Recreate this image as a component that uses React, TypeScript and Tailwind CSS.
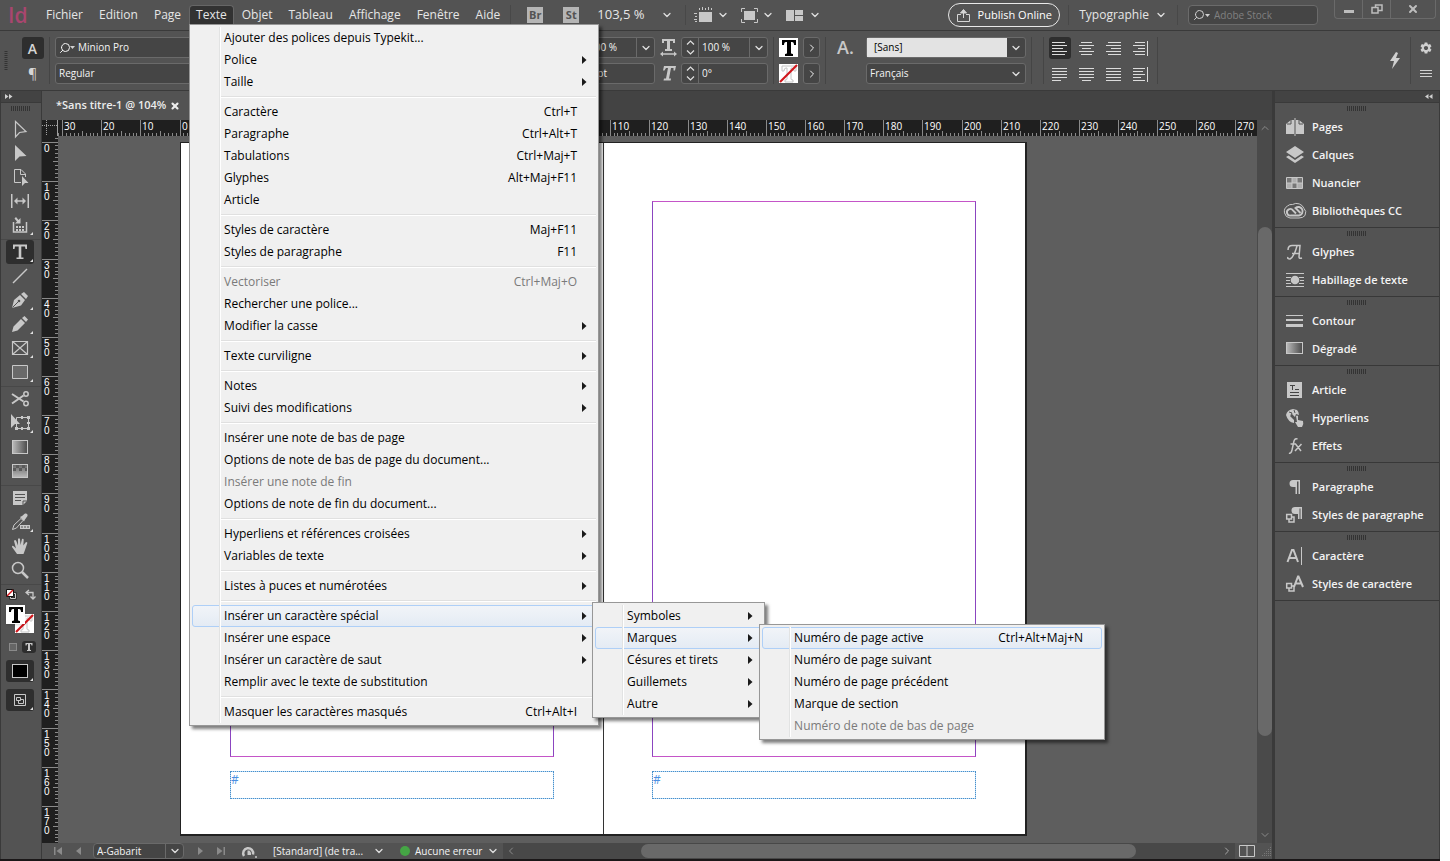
import type { ReactNode } from 'react';
import { ChevronDown, ChevronRight, ChevronLeft, ChevronUp, Search, X } from 'lucide-react';
import { MdSettings } from 'react-icons/md';

type MenuEntry = {
    label: string;
    shortcut?: string;
    disabled?: boolean;
    arrow?: boolean;
    active?: boolean;
    children?: Entry[];
    box?: string;
};
type Entry = MenuEntry | '-';

const marquesMenu: Entry[] = [
    { label: 'Numéro de page active', shortcut: 'Ctrl+Alt+Maj+N', active: true },
    { label: 'Numéro de page suivant' },
    { label: 'Numéro de page précédent' },
    { label: 'Marque de section' },
    { label: 'Numéro de note de bas de page', disabled: true },
];

const specialMenu: Entry[] = [
    { label: 'Symboles', arrow: true },
    { label: 'Marques', arrow: true, active: true, children: marquesMenu, box: 'left-[164px] w-[346px]' },
    { label: 'Césures et tirets', arrow: true },
    { label: 'Guillemets', arrow: true },
    { label: 'Autre', arrow: true },
];

const texteMenu: Entry[] = [
    { label: 'Ajouter des polices depuis Typekit...' },
    { label: 'Police', arrow: true },
    { label: 'Taille', arrow: true },
    '-',
    { label: 'Caractère', shortcut: 'Ctrl+T' },
    { label: 'Paragraphe', shortcut: 'Ctrl+Alt+T' },
    { label: 'Tabulations', shortcut: 'Ctrl+Maj+T' },
    { label: 'Glyphes', shortcut: 'Alt+Maj+F11' },
    { label: 'Article' },
    '-',
    { label: 'Styles de caractère', shortcut: 'Maj+F11' },
    { label: 'Styles de paragraphe', shortcut: 'F11' },
    '-',
    { label: 'Vectoriser', shortcut: 'Ctrl+Maj+O', disabled: true },
    { label: 'Rechercher une police...' },
    { label: 'Modifier la casse', arrow: true },
    '-',
    { label: 'Texte curviligne', arrow: true },
    '-',
    { label: 'Notes', arrow: true },
    { label: 'Suivi des modifications', arrow: true },
    '-',
    { label: 'Insérer une note de bas de page' },
    { label: 'Options de note de bas de page du document...' },
    { label: 'Insérer une note de fin', disabled: true },
    { label: 'Options de note de fin du document...' },
    '-',
    { label: 'Hyperliens et références croisées', arrow: true },
    { label: 'Variables de texte', arrow: true },
    '-',
    { label: 'Listes à puces et numérotées', arrow: true },
    '-',
    { label: 'Insérer un caractère spécial', arrow: true, active: true, children: specialMenu, box: 'left-[400px] w-[173px]' },
    { label: 'Insérer une espace', arrow: true },
    { label: 'Insérer un caractère de saut', arrow: true },
    { label: 'Remplir avec le texte de substitution' },
    '-',
    { label: 'Masquer les caractères masqués', shortcut: 'Ctrl+Alt+I' },
];

function Menu({ entries, box }: { entries: Entry[]; box: string }) {
    return (
        <ul className={`absolute z-20 border border-[#979797] bg-[#f0f0f0] p-0.5 text-[12px] text-black shadow-[3px_3px_3px_rgba(0,0,0,0.5)] ${box}`}>
            {entries.map((entry, i) =>
                entry === '-' ? (
                    <li key={i} className="flex h-2 items-center border-l border-transparent pl-7">
                        <div className="h-0.5 w-full border-t border-[#e0e0e0] bg-white" />
                    </li>
                ) : (
                    <li key={i} className="relative">
                        <button
                            type="button"
                            disabled={entry.disabled}
                            className={`flex h-[22px] w-full items-center rounded-[3px] border pr-2 pl-[31px] text-left whitespace-nowrap ${entry.active
                                ? 'border-[#aecff7] bg-gradient-to-b from-[#f1f4f8] to-[#e4ebf4]'
                                : 'border-transparent'
                                } ${entry.disabled ? 'text-[#7a7a7a]' : ''}`}
                        >
                            <span className="flex-1">{entry.label}</span>
                            {entry.shortcut && <span className="pr-2.5">{entry.shortcut}</span>}
                            {entry.arrow && (
                                <svg width="5" height="8" viewBox="0 0 5 8" fill="#1a1a1a"><path d="M0 0 L4.5 4 L0 8Z" /></svg>
                            )}
                        </button>
                        {entry.children && <Menu entries={entry.children} box={`-top-[3px] ${entry.box}`} />}
                    </li>
                ),
            )}
            <li aria-hidden="true" className="pointer-events-none absolute inset-y-0.5 left-[29px] w-0.5 border-l border-[#e2e3e3] bg-white" />
        </ul>
    );
}

const Down = () => <ChevronDown className="h-3 w-3 shrink-0 text-[#e0e0e0]" strokeWidth={2.5} />;

const Divider = () => <div className="h-full w-px shrink-0 bg-[#454545]" />;

function Grip() {
    return (
        <div className="flex h-2.5 items-center justify-center">
            <svg width="20" height="5" viewBox="0 0 20 5" className="text-[#333]">
                <path d="M.5 0V5M2.500 0V5M4.500 0V5M6.500 0V5M8.500 0V5M10.500 0V5M12.500 0V5M14.500 0V5M16.500 0V5M18.500 0V5" stroke="currentColor" />
            </svg>
        </div>
    );
}

function TitleBar() {
    const before = ['Fichier', 'Edition', 'Page'];
    const after = ['Objet', 'Tableau', 'Affichage', 'Fenêtre', 'Aide'];
    return (
        <header className="flex h-[30px] shrink-0 items-center text-[12px] text-[#e6e6e6]">
            <div className="w-[38px] shrink-0 pl-2 text-[21px] leading-none font-semibold text-[#a8466f]">Id</div>
            <nav className="flex h-full shrink-0 items-center">
                {before.map((name) => <button key={name} type="button" className="px-2">{name}</button>)}
                <div className="relative self-start pt-[5px]">
                    <button type="button" className="flex h-[19px] items-center rounded-t-sm border border-b-0 border-[#666] bg-[#323232] px-1.5">Texte</button>
                    <Menu entries={texteMenu} box="top-6 left-0 w-[410px]" />
                </div>
                {after.map((name) => <button key={name} type="button" className="px-2">{name}</button>)}
            </nav>
            <div className="ml-0.5 flex items-center">
                <div className="h-5 w-px bg-[#484848]" />
                <button type="button" className="ml-4 h-4 w-4 bg-[#b5b5b5] text-[11px] leading-4 font-bold text-[#535353]">Br</button>
                <button type="button" className="ml-5 h-4 w-4 bg-[#b5b5b5] text-[11px] leading-4 font-bold text-[#535353]">St</button>
                <span className="ml-[18px] w-16 text-[13px]">103,5 %</span>
                <Down />
                <div className="mx-2 ml-3 h-5 w-px bg-[#484848]" />
                <svg width="19" height="16" viewBox="0 0 19 16" className="text-[#c8c8c8]">
                    <rect x="5" y="5" width="13" height="10" fill="currentColor" />
                    <path d="M5.500 1V3M8.500 0V3M11.500 1V3M14.500 0V3M17.500 1V3M0 6.500H3M1 9.500H3M0 12.500H3M1 14.500H3" stroke="currentColor" />
                </svg>
                <span className="mr-2 ml-1"><Down /></span>
                <svg width="17" height="15" viewBox="0 0 17 15" className="mx-1 text-[#c8c8c8]">
                    <rect x="3" y="3" width="11" height="9" fill="currentColor" />
                    <path d="M.5 4V.5H4M13 .5H16.500V4M16.500 11V14.500H13M4 14.500H.5V11" fill="none" stroke="currentColor" />
                </svg>
                <span className="mr-3"><Down /></span>
                <svg width="17" height="11" viewBox="0 0 17 11" fill="#c8c8c8"><path d="M0 0H8V11H0ZM9 0H17V5H9ZM9 6H17V11H9Z" /></svg>
                <span className="ml-1.5"><Down /></span>
            </div>
            <div className="ml-auto flex h-full shrink-0 items-center">
                <button type="button" className="flex h-6 w-28 items-center justify-center gap-2 rounded-full border border-[#e8e8e8] text-white">
                    <svg width="13" height="13" viewBox="0 0 13 13" fill="none" stroke="#d6d6d6"><path d="M4 5.500H.5V12.500H12.500V5.500H9M6.500 9V1.500" /><path d="M3.500 4 6.500.5 9.500 4Z" fill="#d6d6d6" /></svg>
                    <span className="text-[11px]">Publish Online</span>
                </button>
                <div className="mx-2 mr-2.5 h-5 w-px bg-[#484848]" />
                <button type="button" className="flex items-center gap-1.5">Typographie <Down /></button>
                <div className="mx-2.5 h-5 w-px bg-[#484848]" />
                <label className="flex h-5 w-[130px] items-center gap-1 rounded-sm border border-[#6b6b6b] bg-[#454545] px-1">
                    <Search className="h-3 w-3 shrink-0 -scale-x-100 text-[#d0d0d0]" />
                    <svg width="5" height="3" fill="#d0d0d0" className="-ml-1 shrink-0"><path d="M0 0H5L2.500 3Z" /></svg>
                    <input aria-label="Adobe Stock" placeholder="Adobe Stock" className="min-w-0 flex-1 bg-transparent text-[10px] placeholder:text-[#808080]" />
                </label>
                <div className="mr-1 ml-4 flex h-[19px] self-start rounded-b-sm border border-t-0 border-[#6a6a6a] text-[#bdbdbd]">
                    <button type="button" aria-label="Réduire" className="flex w-7 items-center justify-center border-r border-[#6a6a6a] pt-1"><svg width="10" height="3"><path d="M0 0H10V3H0Z" fill="currentColor" /></svg></button>
                    <button type="button" aria-label="Restaurer" className="flex w-7 items-center justify-center border-r border-[#6a6a6a]">
                        <svg width="12" height="10" viewBox="0 0 12 10" fill="none" stroke="currentColor" strokeWidth="1.500"><path d="M1 3.500H7V9H1ZM4.500 3V1H11V6.500H7.500" /></svg>
                    </button>
                    <button type="button" aria-label="Fermer" className="flex w-11 items-center justify-center"><X className="h-3 w-3" strokeWidth={4} /></button>
                </div>
            </div>
        </header>
    );
}

const fieldBox = 'flex h-[21px] items-center rounded-[3px] border border-[#6a6a6a] bg-[#454545]';

function Spinner({ label, value, drop }: { label: string; value: string; drop?: boolean }) {
    return (
        <label className={`${fieldBox} w-[87px] shrink-0`}>
            <span className="flex h-full w-[17px] shrink-0 flex-col items-center justify-center border-r border-[#6a6a6a]">
                <svg width="9" height="15" viewBox="0 0 9 15" fill="none" stroke="#e0e0e0" strokeWidth="1.200"><path d="M1 4.500 4.500 1 8 4.500M1 10.500 4.500 14 8 10.500" /></svg>
            </span>
            <input aria-label={label} defaultValue={value} className="min-w-0 flex-1 bg-transparent pl-[3px]" />
            {drop && <span className="flex h-full w-[18px] shrink-0 items-center justify-center border-l border-[#6a6a6a]"><Down /></span>}
        </label>
    );
}

function AlignIcon({ rows, bar }: { rows: [number, number][]; bar?: boolean }) {
    return (
        <svg width="16" height="15" viewBox="0 0 16 15" stroke="#dcdcdc" fill="none">
            {rows.map(([a, b], i) => <path key={i} d={`M${a} ${i * 3 + 1.5}H${b}`} />)}
            {bar && <path d="M14.500 0V15" />}
        </svg>
    );
}

const alignments: { name: string; bar?: boolean; rows: [number, number][] }[] = [
    { name: 'Aligner à gauche', rows: [[0, 13], [0, 15], [0, 11], [0, 15], [0, 13]] },
    { name: 'Centrer', rows: [[2, 13], [0, 15], [3, 12], [0, 15], [2, 13]] },
    { name: 'Aligner à droite', rows: [[2, 15], [0, 15], [5, 15], [0, 15], [2, 15]] },
    { name: 'Vers le dos', bar: true, rows: [[2, 12], [0, 12], [5, 12], [0, 12], [2, 12]] },
    { name: 'Justifier à gauche', rows: [[0, 15], [0, 15], [0, 15], [0, 15], [0, 9]] },
    { name: 'Justifier centré', rows: [[0, 15], [0, 15], [0, 15], [0, 15], [3, 12]] },
    { name: 'Justifier tout', rows: [[0, 15], [0, 15], [0, 15], [0, 15], [0, 15]] },
    { name: 'Opposé au dos', bar: true, rows: [[0, 12], [0, 10], [0, 12], [0, 8], [0, 12]] },
];

const serifT = 'M1 0H15V5H13Q13 2 11 2H10V13Q10 14 12 14V16H4V14Q6 14 6 13V2H5Q3 2 3 5H1Z';

const TGlyph = ({ className }: { className: string }) => (
    <svg viewBox="0 0 16 16" className={className} fill="currentColor"><path d={serifT} /></svg>
);

const NoneT = ({ size }: { size: number }) => (
    <svg width={size} height={size} viewBox="0 0 19 19">
        <path d="M0 0H19V19H0Z" fill="#fff" />
        <path d={serifT} transform="translate(2 2)" fill="none" stroke="#c4c4c4" />
        <path d="M1 18 18 1" stroke="#d0151b" strokeWidth="2.200" />
    </svg>
);

const ArrowButton = ({ label }: { label: string }) => (
    <button type="button" aria-label={label} className={`${fieldBox} w-[17px] justify-center`}><ChevronRight className="h-3 w-3" /></button>
);

function ControlBar() {
    return (
        <div className="flex h-[61px] shrink-0 gap-[5px] border-y border-[#3a3a3a] px-1 py-1.5 text-[10px] text-[#f4f4f4]">
            <div className="flex w-3 items-center"><svg width="4" height="20"><path d="M2 0V20" stroke="#333" strokeWidth="3" strokeDasharray="1 1" /></svg></div>
            <div className="flex w-[23px] flex-col items-center gap-1">
                <button type="button" className="h-[22px] w-[22px] rounded-[3px] bg-[#2e2e2e] text-[14px] font-semibold text-[#d6d6d6]">A</button>
                <button type="button" className="h-[21px] text-[14px] text-[#d6d6d6]">¶</button>
            </div>
            <Divider />
            <div className="flex w-[481px] shrink-0 flex-col gap-[5px]">
                <label className={`${fieldBox} w-[300px] gap-[3px] px-[3px]`}>
                    <Search className="h-3 w-3 -scale-x-100" />
                    <svg width="5" height="3" fill="#d0d0d0" className="-ml-1"><path d="M0 0H5L2.500 3Z" /></svg>
                    <input aria-label="Police" defaultValue="Minion Pro" className="min-w-0 flex-1 bg-transparent" />
                </label>
                <select aria-label="Style de police" className={`${fieldBox} w-[300px] appearance-none px-[3px]`}><option>Regular</option></select>
            </div>
            <div className="flex w-[22px] shrink-0 flex-col" />
            <div className="flex flex-col gap-[5px]">
                <Spinner label="Échelle verticale" value="100 %" drop />
                <Spinner label="Décalage vertical" value="0 pt" />
            </div>
            <div className="flex w-4 shrink-0 flex-col items-center gap-[5px] text-[#c8c8c8]">
                <svg width="17" height="21" viewBox="0 0 17 21" fill="currentColor">
                    <path d="M2 2H15V6H13V4H10V12H12V14H5V12H7V4H4V6H2ZM0 17 3 14.500V16.300H14V14.500L17 17 14 19.500V17.700H3V19.500Z" />
                </svg>
                <svg width="17" height="21" viewBox="0 0 17 21" fill="currentColor"><path d="M4 3H16L15 7.500H13.500V5H11L9 15.500H11L10.700 17.500H3.500L4 15.500H6L8 5H6L4.500 7.500H3Z" /></svg>
            </div>
            <div className="flex flex-col gap-[5px]">
                <Spinner label="Échelle horizontale" value="100 %" drop />
                <Spinner label="Inclinaison" value="0°" />
            </div>
            <Divider />
            <div className="flex w-[19px] flex-col items-end gap-[7px] pt-px">
                <span className="flex h-[19px] w-[19px] items-center justify-center bg-white text-black"><TGlyph className="h-4 w-4" /></span>
                <NoneT size={19} />
            </div>
            <div className="flex flex-col gap-[5px]"><ArrowButton label="Fond" /><ArrowButton label="Contour de texte" /></div>
            <Divider />
            <div className="w-[30px] pl-1.5 text-[18px] leading-5 font-semibold text-[#c8c8c8]">A.</div>
            <div className="flex w-40 shrink-0 flex-col gap-[5px]">
                <label className={`${fieldBox} w-full`}>
                    <select aria-label="Style de caractère" className="h-full flex-1 appearance-none bg-[#e3e3e3] px-[7px] text-black"><option>[Sans]</option></select>
                    <span className="flex w-[18px] justify-center"><Down /></span>
                </label>
                <label className={`${fieldBox} w-full`}>
                    <select aria-label="Langue" className="h-full flex-1 appearance-none bg-transparent px-[3px]"><option>Français</option></select>
                    <span className="flex w-[18px] justify-center"><Down /></span>
                </label>
            </div>
            <Divider />
            <span className="w-px" />
            <Divider />
            <div className="grid shrink-0 grid-cols-4 content-start gap-x-[5px] gap-y-1">
                {alignments.map((a, i) => (
                    <button key={a.name} type="button" aria-label={a.name} className={`flex h-[22px] w-[22px] items-center justify-center rounded-[3px] ${i === 0 ? 'bg-[#2e2e2e]' : ''}`}>
                        <AlignIcon rows={a.rows} bar={a.bar} />
                    </button>
                ))}
            </div>
            <Divider />
            <div className="ml-auto flex items-center pr-1">
                <svg width="12" height="17" viewBox="0 0 12 17" fill="#d0d0d0"><path d="M7 0 1 9H5L3 17 11 6H7L9 1Z" /></svg>
            </div>
            <Divider />
            <div className="flex w-5 flex-col items-center gap-[5px] text-[#d0d0d0]">
                <button type="button" aria-label="Personnaliser" className="flex h-[21px] items-center"><MdSettings className="h-3.5 w-3.5" /></button>
                <button type="button" aria-label="Menu du panneau" className="flex h-[21px] items-center">
                    <svg width="12" height="9" stroke="currentColor"><path d="M0 1.500H12M0 4.500H12M0 7.500H12" /></svg>
                </button>
            </div>
        </div>
    );
}

/* Tool drawings share a 24x24 box */
const tools: { name: string; corner?: boolean; art: ReactNode }[][] = [
    [
        { name: 'Sélection', art: <path d="M7.500 4.500V20L11.500 15.500 18 14.500Z" fill="none" stroke="currentColor" strokeWidth="1.200" /> },
        { name: 'Sélection directe', art: <path d="M7 4V20L11.500 15.500 18.500 15Z" /> },
        { name: 'Page', art: <><path d="M13 17.500H6.500V4.500H13L17.500 9V12M12.500 5V9.500H17" fill="none" stroke="currentColor" /><path d="M14 11V21L17 18H20.500Z" /></> },
        { name: 'Espace', art: <path d="M3 5H4.500V19H3ZM19.500 5H21V19H19.500ZM6 12 9.500 8.500V11.300H14.500V8.500L18 12 14.500 15.500V12.700H9.500V15.500Z" /> },
        { name: 'Collecteur de contenu', corner: true, art: <><path d="M5.500 9V19H18.500V9" fill="none" stroke="currentColor" strokeWidth="1.500" /><path d="M8 13H10V15H8ZM11 13H13V15H11ZM14 13H16V15H14ZM8 16H10V18H8ZM11 16H13V18H11ZM14 16H16V18H14ZM12.500 5V10.500H7L9 8.500 6.500 5.500 8 4 10.500 7Z" /></> },
    ],
    [
        { name: 'Texte', corner: true, art: <path d="M5 4.500H19V9H17.500L17 6.500H13.300V17.500H15.500V19H8.500V17.500H10.700V6.500H7L6.500 9H5Z" /> },
        { name: 'Trait', art: <path d="M5 19 19 5" stroke="currentColor" strokeWidth="1.500" /> },
        { name: 'Plume', corner: true, art: <><path d="M4 20 6 12 12 7 17 12 13 17.500ZM13 6 16 4 20 8 18 11Z" /><path d="M4.500 19.500 10.500 13.500" stroke="#535353" /><circle cx="11" cy="13" r="1.300" fill="#535353" /></> },
        { name: 'Crayon', corner: true, art: <path d="M4 20 5.500 14.500 13 7 17 11 9.500 18.500ZM14 6 16.500 4 20 7.500 18 10Z" /> },
        { name: 'Bloc rectangulaire', corner: true, art: <path d="M4.500 5.500H19.500V18.500H4.500ZM4.500 5.500 19.500 18.500M19.500 5.500 4.500 18.500" fill="none" stroke="currentColor" strokeWidth="1.200" /> },
        { name: 'Rectangle', corner: true, art: <path d="M4.500 5.500H19.500V18.500H4.500Z" fill="#6a6a6a" stroke="currentColor" /> },
    ],
    [
        { name: 'Ciseaux', art: <><path d="M4 7 15.500 14.500M4 16.500 15.500 8.500" stroke="currentColor" strokeWidth="2" /><g fill="none" stroke="currentColor" strokeWidth="1.500"><circle cx="18" cy="7" r="2.200" /><circle cx="18" cy="16.500" r="2.200" /></g></> },
        { name: 'Transformation', corner: true, art: <><path d="M8.500 6.500H20.500V17.500H8.500Z" fill="none" stroke="currentColor" /><path d="M3 3V17L7 13H12ZM19 5H22V8H19ZM19 16H22V19H19ZM7 16H10V19H7ZM13 5H15V8H13ZM13 16H15V19H13ZM19 11H22V13H19Z" /></> },
        { name: 'Nuance de dégradé', art: <rect x="4.500" y="5.500" width="15" height="13" fill="url(#fade)" stroke="currentColor" /> },
        { name: 'Contour progressif', art: <><rect x="4.500" y="5.500" width="15" height="13" fill="url(#fadeUp)" stroke="currentColor" /><path d="M8 6H11V9H8ZM14 6H17V9H14ZM5 9H8V12H5ZM11 9H14V12H11ZM17 9H19V12H17Z" fill="#5a5a5a" /></> },
    ],
    [
        { name: 'Note', art: <><path d="M5 5H19V15L15 19H5Z" /><path d="M7 8.500H17M7 11.500H17M7 14.500H13M15 19V15H19" stroke="#535353" fill="none" /></> },
        { name: 'Pipette', corner: true, art: <><path d="M4.500 19.500 6 15 13 8.500 15 10.500 8.500 18Z" fill="none" stroke="currentColor" /><path d="M12 7 14 6 17 3.500Q20 3 19.500 6L17 9.500 16 11.500ZM12 15H22V19H12Z" /><path d="M13 17H21" stroke="#535353" strokeDasharray="2 1" /></> },
        { name: 'Main', art: <path d="M9 20 4 13Q4 11 6 12.500L8 14.500 6 7Q7 5 8.300 7L10 11.500 10 5Q11 3.500 12 5L12.500 11 14 5Q15.500 4 15.700 6L15.300 11.500 18 8Q20 8 19 10L17 16 15.500 20Z" /> },
        { name: 'Zoom', art: <><circle cx="10" cy="10" r="5.500" fill="none" stroke="currentColor" strokeWidth="1.500" /><path d="M14 14 20 20" stroke="currentColor" strokeWidth="2.500" /></> },
    ],
];

function Toolbar() {
    return (
        <aside className="flex w-[42px] shrink-0 flex-col border-x border-l-[#3a3a3a] border-r-[#3a3a3a] text-[#c8c8c8]">
            <div className="flex h-3 items-center border-b border-[#3a3a3a] bg-[#434343] pl-1">
                <svg width="8" height="5" fill="#d0d0d0"><path d="M0 0 3.500 2.500 0 5ZM4 0 7.500 2.500 4 5Z" /></svg>
            </div>
            <Grip />
            <div className="h-1" />
            {tools.map((group, g) => (
                <div key={g} className="flex flex-col border-b border-[#484848] pb-0.5">
                    {group.map((tool) => (
                        <button
                            key={tool.name}
                            type="button"
                            aria-label={tool.name}
                            className={`relative ml-[5px] flex h-6 w-7 items-center justify-center rounded-[3px] ${tool.name === 'Texte' ? 'bg-[#2e2e2e]' : ''}`}
                        >
                            <svg width="24" height="24" viewBox="0 0 24 24" fill="currentColor">
                                <defs>
                                    <linearGradient id="fade"><stop stopColor="#bbb" /><stop offset="1" stopColor="#4a4a4a" /></linearGradient>
                                    <linearGradient id="fadeUp" x1="0" y1="0" x2="0" y2="1"><stop stopColor="#666" /><stop offset="1" stopColor="#bbb" /></linearGradient>
                                </defs>
                                {tool.art}
                            </svg>
                            {tool.corner && <svg width="3" height="3" className="absolute right-px bottom-0.5" fill="#e0e0e0"><path d="M3 0V3H0Z" /></svg>}
                        </button>
                    ))}
                </div>
            ))}
            <div className="flex h-4 items-center justify-between px-[5px] pt-0.5">
                <svg width="11" height="11" viewBox="0 0 11 11"><path d="M4.500 4.500H9.500V9.500H4.500Z" fill="none" stroke="#111" strokeWidth="2" /><path d="M4.500 4.500H9.500V9.500H4.500Z" fill="none" stroke="#ccc" /><path d="M.5.5H7.500V7.500H.5Z" fill="#fff" stroke="#111" /><path d="M1 7 7 1" stroke="#d0151b" strokeWidth="1.500" /></svg>
                <svg width="11" height="11" viewBox="0 0 11 11" fill="none" stroke="currentColor" strokeWidth="1.300"><path d="M2 3.500H8V9M4 1 1 3.500 4 6M5.500 7.500 8 10 10.500 7.500" /></svg>
            </div>
            <div className="relative ml-[5px] h-8 w-7">
                <span className="absolute right-0 bottom-0"><NoneT size={19} /></span>
                <span className="absolute top-1 left-0 flex h-[19px] w-[19px] items-center justify-center bg-white text-black shadow"><TGlyph className="h-4 w-4" /></span>
            </div>
            <div className="mt-1 ml-[5px] flex h-5 w-[30px] items-center justify-between">
                <button type="button" aria-label="Conteneur" className="ml-[3px] h-2 w-2 border border-[#8a8a8a] bg-[#666]" />
                <button type="button" aria-label="Appliquer au texte" className="flex h-3 w-3.5 items-center justify-center rounded-[3px] bg-[#2e2e2e]"><TGlyph className="h-2 w-2" /></button>
            </div>
            <button type="button" aria-label="Appliquer la couleur" className="relative mt-[3px] ml-[5px] flex h-[22px] w-7 items-center justify-center rounded-[3px] bg-[#2e2e2e]">
                <span className="h-3.5 w-4 border border-[#c8c8c8] bg-black" />
                <svg width="3" height="3" className="absolute right-px bottom-px" fill="#e0e0e0"><path d="M3 0V3H0Z" /></svg>
            </button>
            <button type="button" aria-label="Mode d'affichage" className="relative mt-[7px] ml-[5px] flex h-[22px] w-7 items-center justify-center rounded-[3px] bg-[#2e2e2e]">
                <svg width="12" height="12" viewBox="0 0 12 12" fill="none" stroke="#c8c8c8"><path d="M.5.5H11.500V11.500H.5ZM2.500 3.500H6.500V6.500H2.500ZM7 5.500H9.500V9.500H4.500V7" /></svg>
                <svg width="3" height="3" className="absolute right-px bottom-px" fill="#e0e0e0"><path d="M3 0V3H0Z" /></svg>
            </button>
        </aside>
    );
}

const STEP = 39.1; // screen pixels for 10 mm

function tickPath(origin: number, from: number, to: number, vertical: boolean) {
    let d = '';
    for (let mm = from; mm <= to; mm++) {
        const p = Math.floor(origin + (mm * STEP) / 10) + 0.5;
        const len = mm % 10 === 0 ? 16 : mm % 5 === 0 ? 5 : 3;
        d += vertical ? `M${16 - len} ${p}H16` : `M${p} ${16 - len}V16`;
    }
    return d;
}

function HorizontalRuler() {
    const labels = Array.from({ length: 31 }, (_, i) => i - 3);
    return (
        <svg className="h-4 min-w-0 flex-1 bg-[#1f1f1f]" fontSize="10" fill="#fff">
            <path d={tickPath(122, -31, 274, false)} stroke="#8a8a8a" />
            {labels.map((n) => <text key={n} x={Math.floor(124 + n * STEP)} y="10">{Math.abs(n * 10)}</text>)}
        </svg>
    );
}

function VerticalRuler() {
    const labels = Array.from({ length: 18 }, (_, i) => i);
    return (
        <svg className="w-4 shrink-0 bg-[#1f1f1f] font-['Liberation_Sans',sans-serif]" fontSize="10" fill="#fff">
            <path d={tickPath(6, -1, 179, true)} stroke="#8a8a8a" />
            {labels.map((n) => (
                <text key={n} y={Math.floor(16 + n * STEP)}>
                    {String(n * 10).split('').map((digit, i) => <tspan key={i} x="2" dy={i ? 9 : 0}>{digit}</tspan>)}
                </text>
            ))}
        </svg>
    );
}

function SpreadPage({ side }: { side: string }) {
    return (
        <div className={`flex flex-1 basis-0 flex-col pt-[58px] ${side}`}>
            <div className="h-[556px] border border-x-[#8b45c0] border-y-[#c455c8]" />
            <div className="mt-3.5 h-7 border border-[#b4d8f5] text-[12px] leading-4 text-[#4a90e2] outline-1 -outline-offset-1 outline-[#4a8fc8] outline-dotted">#</div>
        </div>
    );
}

function StatusBar() {
    return (
        <footer className="flex h-4 shrink-0 items-center bg-[#484848] text-[10px] text-[#f4f4f4]">
            <div className="flex h-full shrink-0 items-center bg-[#535353] pl-3">
                <button type="button" aria-label="Première page"><svg width="8" height="8" fill="#8a8a8a"><path d="M0 0H1.500V8H0ZM8 0V8L2.500 4Z" /></svg></button>
                <button type="button" aria-label="Page précédente" className="ml-3.5"><svg width="5" height="8" fill="#8a8a8a"><path d="M5 0V8L0 4Z" /></svg></button>
                <label className="ml-3 flex h-4 w-[91px] items-center rounded-sm border border-[#6a6a6a] bg-[#454545]">
                    <select aria-label="Page" className="h-full w-[71px] appearance-none bg-transparent px-[3px]"><option>A-Gabarit</option></select>
                    <span className="flex h-full w-[18px] items-center justify-center border-l border-[#6a6a6a]"><Down /></span>
                </label>
                <button type="button" aria-label="Page suivante" className="ml-3.5"><svg width="5" height="8" fill="#8a8a8a"><path d="M0 0V8L5 4Z" /></svg></button>
                <button type="button" aria-label="Dernière page" className="ml-3.5"><svg width="8" height="8" fill="#8a8a8a"><path d="M0 0V8L5.500 4ZM6.500 0H8V8H6.500Z" /></svg></button>
                <svg width="16" height="13" viewBox="0 0 16 13" className="mr-4 ml-4"><path d="M3 11A5 5 0 1 1 12 9.500" fill="none" stroke="#c8c8c8" strokeWidth="2.500" /><path d="M6.500 5.500H8.500L10 7.500V10H6.500Z" fill="#c8c8c8" /><circle cx="15" cy="12" r="1" fill="#c8c8c8" /></svg>
                <span className="w-[100px] whitespace-nowrap">[Standard] (de tra...</span>
                <Down />
                <span className="mr-[5px] ml-[15px] h-2.5 w-2.5 rounded-full bg-[#45a545]" />
                <span className="w-[72px] whitespace-nowrap">Aucune erreur</span>
                <Down />
                <span className="w-1" />
            </div>
            <div className="flex min-w-0 flex-1 items-center px-0.5">
                <ChevronLeft className="h-3 w-3 shrink-0 text-[#8a8a8a]" />
                <div className="ml-[17%] h-3.5 w-[68%] rounded-full bg-[#696969]" />
                <ChevronRight className="ml-auto h-3 w-3 shrink-0 text-[#a8a8a8]" />
            </div>
            <div className="flex h-full w-[37px] items-center justify-between bg-[#535353] pl-1">
                <svg width="16" height="12" viewBox="0 0 16 12" fill="none" stroke="#c8c8c8"><path d="M.5.5H15.500V11.500H.5ZM8 0V12" /></svg>
                <svg width="10" height="10" stroke="#777" strokeDasharray="1 1"><path d="M8 1.500H10M6 3.500H10M4 5.500H10M2 7.500H10M0 9.500H10" /></svg>
            </div>
        </footer>
    );
}

function DocumentArea() {
    return (
        <main className="flex min-w-0 flex-1 flex-col">
            <div className="flex h-[29px] shrink-0 bg-[#434343]">
                <div className="flex w-[190px] items-center gap-2 bg-[#535353] pl-3.5 text-[11px] font-semibold text-[#ececec]">
                    *Sans titre-1 @ 104%
                    <button type="button" aria-label="Fermer le document" className="-ml-1"><X className="h-2.5 w-2.5" strokeWidth={5} /></button>
                </div>
            </div>
            <div className="flex min-h-0 flex-1">
                <div className="flex min-w-0 flex-1 flex-col">
                    <div className="flex h-4 shrink-0">
                        <svg width="16" height="16" className="bg-[#1f1f1f]"><path d="M0 5.500H16M4.500 0V16" stroke="#a0a0a0" strokeDasharray="1 1" /><path d="M15.500 0V16" stroke="#a0a0a0" /></svg>
                        <HorizontalRuler />
                    </div>
                    <div className="flex min-h-0 flex-1">
                        <VerticalRuler />
                        <div className="relative min-w-0 flex-1 overflow-hidden bg-[#5e5e5e]">
                            <div className="absolute top-1.5 left-[122px] flex h-[694px] w-[847px] border border-r-2 border-b-2 border-[#222] bg-white">
                                <SpreadPage side="px-[49px]" />
                                <SpreadPage side="border-l border-[#333] pr-[49px] pl-12" />
                            </div>
                        </div>
                    </div>
                </div>
                <div className="flex w-[15px] shrink-0 flex-col items-center justify-between bg-[#4a4a4a] py-0.5 text-[#8a8a8a]">
                    <ChevronUp className="h-3 w-3" />
                    <div className="h-[509px] w-3.5 rounded-full bg-[#696969]" />
                    <ChevronDown className="h-3 w-3" />
                </div>
            </div>
            <StatusBar />
        </main>
    );
}

/* Panel drawings share an 18x18 box */
const panels: { name: string; art: ReactNode }[][] = [
    [
        { name: 'Pages', art: <><path d="M0 6 5 2H8V16H0ZM10 2H13L18 6V16H10Z" /><path d="M9 0V18" stroke="currentColor" /><path d="M5 2V6H1M13 2V6H17" fill="none" stroke="#535353" /></> },
        { name: 'Calques', art: <path d="M9 0 18 6 9 12 0 6ZM0 11 2.500 9.500 9 14 15.500 9.500 18 11 9 17Z" /> },
        { name: 'Nuancier', art: <><path d="M.5 3.500H16.500V14.500H.5Z" fill="#777" stroke="currentColor" /><path d="M6 4H11V9H6ZM11 9H16V14H11ZM1 9H6V14H1Z" fillOpacity=".7" /><path d="M.5 9H16.500M6 3V15M11 3V15" stroke="currentColor" /></> },
        { name: 'Bibliothèques CC', art: <g fill="none" stroke="currentColor"><path d="M4 16A6.500 6.500 0 0 1 1.500 4Q3.500 2 6.500 2.500A8 8 0 0 1 18 6.500Q21 9 19 13.500Q17 16 13 16Z" /><path d="M10 11.500 7 8.500A3.300 3.300 0 1 0 5 13.500H13A4.300 4.300 0 1 0 9.500 6L14.500 11" strokeWidth="1.900" /></g> },
    ],
    [
        { name: 'Glyphes', art: <path d="M2 7Q2 2 7 2.500H14L13 14Q13 16 16 15M11 3Q8 14 4 16Q1 16 2 14M6 10.500H13" fill="none" stroke="currentColor" strokeWidth="1.500" /> },
        { name: 'Habillage de texte', art: <><path d="M0 2.500H18M0 6.500H5M13 6.500H18M0 9.500H4M14 9.500H18M0 12.500H5M13 12.500H18M0 15.500H18" stroke="currentColor" /><circle cx="9" cy="9" r="4.300" /></> },
    ],
    [
        { name: 'Contour', art: <path d="M0 3H17V4H0ZM0 7H17V9H0ZM0 12H17V15H0Z" /> },
        { name: 'Dégradé', art: <rect x=".5" y="2.500" width="16" height="11" fill="url(#fade)" stroke="currentColor" /> },
    ],
    [
        { name: 'Article', art: <><path d="M1 1H16V17H1Z" /><path d="M4 4.500H9M6.500 4V9M9 8.500H13M4 11.500H13M4 14.500H13" stroke="#444" /></> },
        { name: 'Hyperliens', art: <><path d="M0 6Q1 1 7 0L11 1Q13 3 13 6L10 5 9 8 6 5 4 7 8 11V14Q2 13 0 6Z" /><path d="M10 7Q11 6 12 7V11L17 12Q18 15 16 18H12L9 13 11 13Z" /><path d="M3 3 6 4 5 6M8 1 9 4" stroke="#535353" fill="none" /></> },
        { name: 'Effets', art: <path d="M3 16Q5 17 6 13L8 4Q9 1 11.500 2M4.500 7H10M9.500 7 15 14M15.500 7 9 14" fill="none" stroke="currentColor" strokeWidth="1.500" /> },
    ],
    [
        { name: 'Paragraphe', art: <path d="M7 2H14V16H12.500V3.500H11V16H9.500V9H7A3.500 3.500 0 0 1 7 2Z" /> },
        { name: 'Styles de paragraphe', art: <><path d="M9 1H16V13H14.500V2.500H13.500V13H12V8H9A3.500 3.500 0 0 1 9 1Z" /><path d="M.7 8.500H5.500V13H.7ZM5.500 11H8V16H3V13" fill="none" stroke="currentColor" strokeWidth="1.500" /></> },
    ],
    [
        { name: 'Caractère', art: <><path d="M1.500 15 6 3H7.500L12 15M3 11H10.500" fill="none" stroke="currentColor" strokeWidth="2" /><path d="M15.500 0V18" stroke="currentColor" /></> },
        { name: 'Styles de caractère', art: <><path d="M8 12 12 1.500H12.500L17 12M9 8.500H15.500" fill="none" stroke="currentColor" strokeWidth="2" /><path d="M.7 8.500H5.500V13H.7ZM5.500 11H8V16H3V13" fill="none" stroke="currentColor" strokeWidth="1.500" /></> },
    ],
];

function PanelDock() {
    return (
        <aside className="w-[168px] shrink-0 border-r border-l-[3px] border-r-[#3a3a3a] border-l-[#3a3a3a] text-[11px] font-semibold text-[#f4f4f4]">
            <div className="flex h-3 items-center justify-end border-b border-[#3a3a3a] bg-[#434343] pr-1.5">
                <svg width="8" height="5" fill="#d0d0d0"><path d="M3.500 0 0 2.500 3.500 5ZM7.500 0 4 2.500 7.500 5Z" /></svg>
            </div>
            {panels.map((group, i) => (
                <section key={i} className="border-b border-[#383838] pb-0.5">
                    <Grip />
                    {group.map((panel) => (
                        <button key={panel.name} type="button" className="flex h-7 w-full items-center gap-2 pl-[11px] whitespace-nowrap">
                            <svg width="18" height="18" viewBox="0 0 18 18" fill="currentColor" className="overflow-visible text-[#c8c8c8]">{panel.art}</svg>
                            {panel.name}
                        </button>
                    ))}
                </section>
            ))}
        </aside>
    );
}

export default function App() {
    return (
        <div className="h-screen overflow-hidden bg-white pr-2.5 font-['Open_Sans','Noto_Sans',sans-serif]">
            <div className="flex h-full flex-col border-b-2 border-[#1a1718] bg-[#535353]">
                <TitleBar />
                <ControlBar />
                <div className="flex min-h-0 flex-1">
                    <Toolbar />
                    <DocumentArea />
                    <PanelDock />
                </div>
            </div>
        </div>
    );
}
